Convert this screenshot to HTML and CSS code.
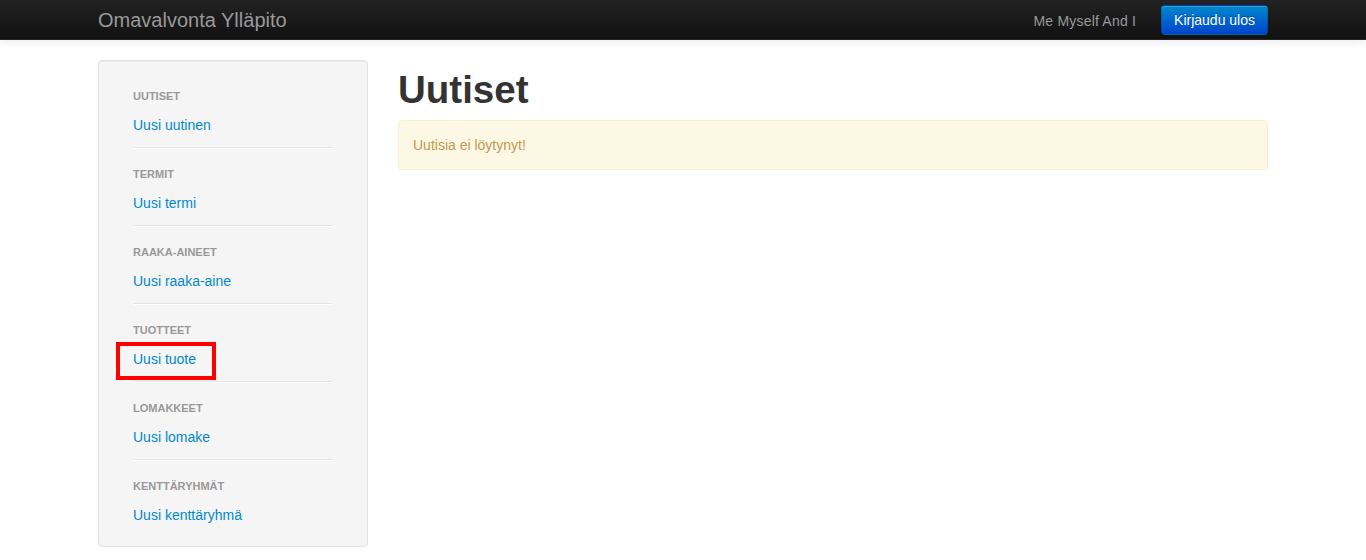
FILE: index.html
```html
<!DOCTYPE html>
<html lang="fi">
<head>
<meta charset="utf-8">
<title>Omavalvonta Ylläpito</title>
<link rel="stylesheet" href="styles.css">
</head>
<body>
<header class="navbar">
  <div class="container navbar-inner">
    <a class="brand" href="#">Omavalvonta Ylläpito</a>
    <div class="navbar-right">
      <span class="navbar-text">Me Myself And I</span>
      <a class="btn btn-primary" href="#">Kirjaudu ulos</a>
    </div>
  </div>
</header>
<div class="container main">
  <aside class="well sidebar">
    <section class="nav-section">
      <div class="nav-header">Uutiset</div>
      <a class="nav-link" href="#">Uusi uutinen</a>
      <div class="divider"></div>
    </section>
    <section class="nav-section">
      <div class="nav-header">Termit</div>
      <a class="nav-link" href="#">Uusi termi</a>
      <div class="divider"></div>
    </section>
    <section class="nav-section">
      <div class="nav-header">Raaka-aineet</div>
      <a class="nav-link" href="#">Uusi raaka-aine</a>
      <div class="divider"></div>
    </section>
    <section class="nav-section">
      <div class="nav-header">Tuotteet</div>
      <a class="nav-link highlighted" href="#">Uusi tuote</a>
      <div class="divider"></div>
    </section>
    <section class="nav-section">
      <div class="nav-header">Lomakkeet</div>
      <a class="nav-link" href="#">Uusi lomake</a>
      <div class="divider"></div>
    </section>
    <section class="nav-section">
      <div class="nav-header">Kenttäryhmät</div>
      <a class="nav-link" href="#">Uusi kenttäryhmä</a>
    </section>
  </aside>
  <main class="content">
    <h1 class="page-title">Uutiset</h1>
    <div class="alert">Uutisia ei löytynyt!</div>
  </main>
</div>
</body>
</html>
```

FILE: styles.css
```css
*, *::before, *::after { box-sizing: border-box; }

html, body {
  margin: 0;
  padding: 0;
  background: #fff;
  font-family: "Liberation Sans", Arial, sans-serif;
  font-size: 14px;
  line-height: 20px;
  color: #333;
}

a { text-decoration: none; }

.container {
  width: 1170px;
  margin: 0 auto;
}

.navbar {
  height: 40px;
  background: linear-gradient(to bottom, #222222, #111111);
  border-bottom: 1px solid #252525;
  box-shadow: 0 1px 10px rgba(0, 0, 0, 0.1);
  position: relative;
  z-index: 2;
}

.navbar-inner {
  height: 40px;
  display: flex;
  align-items: center;
  justify-content: space-between;
}

.brand {
  font-size: 20px;
  line-height: 40px;
  color: #999;
}

.navbar-right {
  display: flex;
  align-items: center;
}

.navbar-text {
  color: #999;
  line-height: 40px;
  padding-top: 1px;
  margin-right: 25px;
  letter-spacing: 0.2px;
}

.btn {
  display: inline-block;
  height: 30px;
  padding: 0 12px;
  line-height: 29px;
  font-size: 14px;
  border-radius: 4px;
}

.btn-primary {
  color: #fff;
  background: linear-gradient(to bottom, #0088cc, #0044cc);
  border: 1px solid #0044cc;
  border-color: rgba(0,0,0,0.1) rgba(0,0,0,0.1) rgba(0,0,0,0.25);
  text-shadow: 0 -1px 0 rgba(0,0,0,0.25);
  box-shadow: inset 0 1px 0 rgba(255,255,255,0.2), 0 1px 2px rgba(0,0,0,0.05);
}

.main {
  display: flex;
  gap: 30px;
  padding-top: 20px;
  align-items: flex-start;
}

.well {
  background: #f5f5f5;
  border: 1px solid #e3e3e3;
  border-radius: 4px;
  box-shadow: inset 0 1px 1px rgba(0, 0, 0, 0.05);
}

.sidebar {
  width: 270px;
  flex: none;
  padding: 25px 34px 21px;
}

.nav-section {
  display: flex;
  flex-direction: column;
}

.nav-header {
  font-size: 11px;
  font-weight: bold;
  line-height: 20px;
  color: #999;
  text-transform: uppercase;
  margin-bottom: 9px;
}

.nav-link {
  font-size: 14px;
  line-height: 20px;
  color: #0088cc;
  align-self: flex-start;
}

.highlighted {
  position: relative;
}

.highlighted::after {
  content: "";
  position: absolute;
  left: -17px;
  top: -7px;
  width: 100px;
  height: 38px;
  border: 4px solid #ff0000;
}

.divider {
  height: 2px;
  margin: 12px 1px 15px;
  background: #e5e5e5;
  border-bottom: 1px solid #fff;
}

.content {
  flex: 1;
}

.page-title {
  margin: 10px 0 10px;
  font-size: 38.5px;
  line-height: 40px;
  font-weight: bold;
  color: #333;
}

.alert {
  background: #fcf8e3;
  border: 1px solid #fbeed5;
  border-radius: 4px;
  color: #c09853;
  padding: 14px;
  line-height: 20px;
}
```
